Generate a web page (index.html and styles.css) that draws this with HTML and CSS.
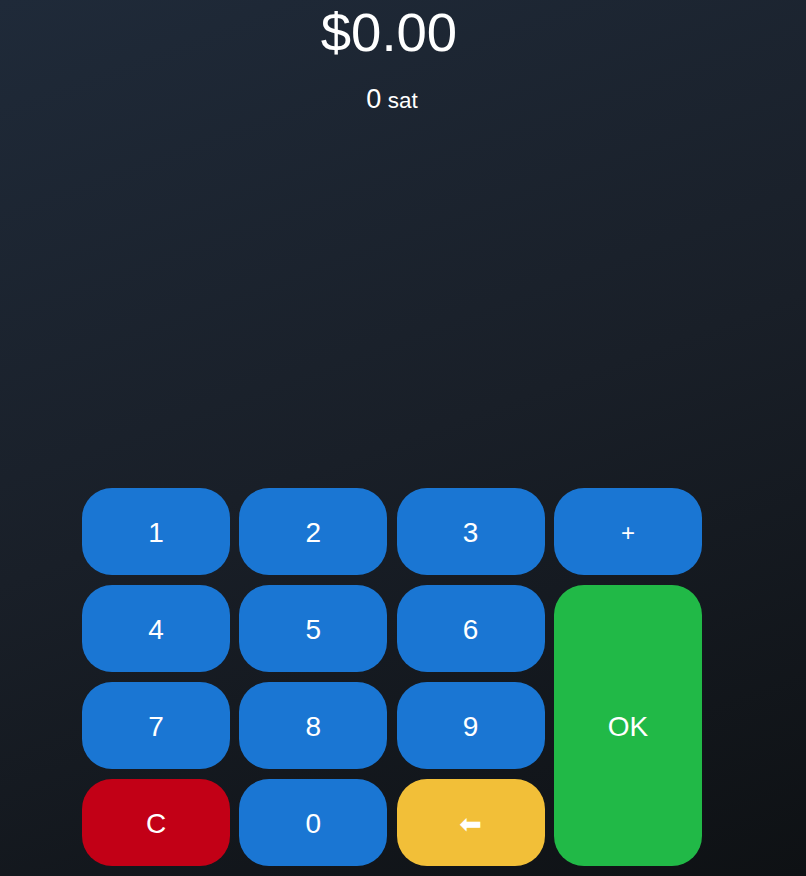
FILE: index.html
```html
<!DOCTYPE html>
<html>
<head>
<meta charset="utf-8">
<link rel="stylesheet" href="styles.css">
</head>
<body>
<div class="app">
  <div class="display">
    <div class="fiat">$0.00</div>
    <div class="sats"><span class="sats-num">0</span> <span class="sats-unit">sat</span></div>
  </div>
  <div class="keypad">
    <button class="key key-blue">1</button>
    <button class="key key-blue">2</button>
    <button class="key key-blue">3</button>
    <button class="key key-blue key-plus">+</button>
    <button class="key key-blue">4</button>
    <button class="key key-blue">5</button>
    <button class="key key-blue">6</button>
    <button class="key key-green key-ok">OK</button>
    <button class="key key-blue">7</button>
    <button class="key key-blue">8</button>
    <button class="key key-blue">9</button>
    <button class="key key-red">C</button>
    <button class="key key-blue">0</button>
    <button class="key key-yellow"><span class="back">⬅</span></button>
  </div>
</div>
</body>
</html>
```
FILE: styles.css
```css
html, body {
  margin: 0;
  padding: 0;
  height: 100%;
}
body {
  background: linear-gradient(160deg, #1f2a39 0%, #191f28 50%, #0e1114 100%);
  font-family: "Liberation Sans", Arial, sans-serif;
  color: #ffffff;
  overflow: hidden;
}
.app {
  width: 784px;
  height: 876px;
  box-sizing: border-box;
  display: flex;
  flex-direction: column;
  justify-content: space-between;
  padding-bottom: 10px;
}
.display {
  text-align: center;
  padding-top: 2px;
}
.fiat {
  font-size: 54.5px;
  line-height: 62px;
  padding-right: 6px;
}
.sats {
  margin-top: 20px;
  line-height: 30px;
}
.sats-num {
  font-size: 27px;
  margin-right: 2px;
}
.sats-unit {
  font-size: 22.5px;
}
.keypad {
  width: 620px;
  margin: 0 auto;
  display: grid;
  grid-template-columns: repeat(4, 148px);
  grid-template-rows: repeat(4, 87px);
  column-gap: 9.33px;
  row-gap: 10px;
}
.key {
  border: none;
  border-radius: 30px;
  color: #ffffff;
  font-family: "Liberation Sans", Arial, sans-serif;
  font-size: 28px;
  padding: 2px 0 0 0;
  margin: 0;
  display: flex;
  align-items: center;
  justify-content: center;
}
.key-blue { background: #1a76d3; }
.key-green { background: #21b947; }
.key-red { background: #c20016; }
.key-yellow { background: #f2bf38; }
.key-plus { font-size: 24px; }
.key-ok {
  grid-column: 4;
  grid-row: 2 / span 3;
}
.back {
  font-family: "DejaVu Sans", sans-serif;
  font-size: 27px;
}
```
